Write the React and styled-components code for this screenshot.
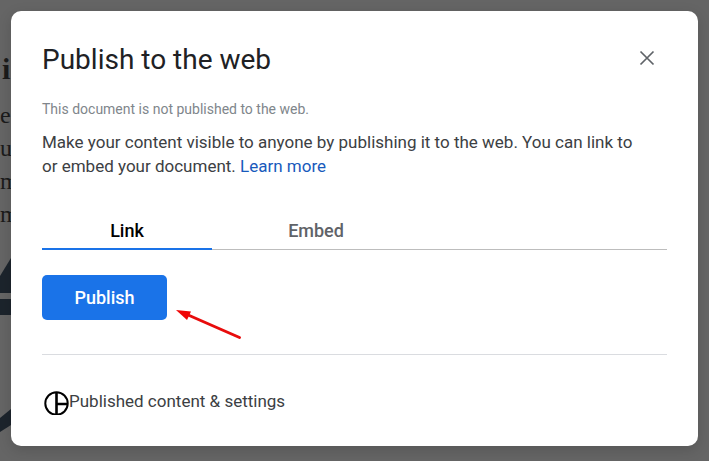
import React, { useState } from "react";
import styled, { createGlobalStyle } from "styled-components";

const GlobalStyle = createGlobalStyle`
  * {
    box-sizing: border-box;
  }

  body {
    margin: 0;
    background: #656565;
    font-family: Roboto, "Liberation Sans", sans-serif;
  }
`;

const Page = styled.div`
  display: grid;
  min-height: 100vh;
  overflow: hidden;

  > * {
    grid-area: 1 / 1;
  }
`;

// the document that stays behind the dialog
const Doc = styled.div`
  padding-top: 52px;
  color: #1b1b1b;
  font-family: "Liberation Serif", serif;
  font-size: 24px;
  line-height: 33px;
`;

const DocHeading = styled.h2`
  margin: 0 0 14px;
  padding-left: 2px;
  font-size: 30px;
  line-height: 33px;
`;

const DocText = styled.p`
  margin: 0;
`;

const DocDrawing = styled.svg`
  display: block;
  width: 11px;
  height: 180px;
  margin-top: 22px;
`;

const Overlay = styled.div`
  z-index: 1;
  padding: 11px 11px 15px;
`;

const Dialog = styled.section`
  padding: 31px;
  border-radius: 10px;
  background: #fff;
  box-shadow: 0 4px 14px rgba(0, 0, 0, 0.15);
  color: #3c4043;
  font-size: 17px;
  line-height: 24px;
`;

const Header = styled.header`
  display: flex;
  align-items: flex-start;
  justify-content: space-between;
  height: 36px;
`;

const Title = styled.h1`
  margin: 0;
  color: #202124;
  font-size: 28px;
  font-weight: 400;
  line-height: 36px;
`;

const CloseButton = styled.button`
  display: flex;
  align-items: center;
  justify-content: center;
  width: 40px;
  height: 32px;
  padding: 0;
  border: none;
  background: none;
  cursor: pointer;
`;

const Status = styled.p`
  margin: 21px 0 11px;
  color: #80868b;
  font-size: 14px;
  line-height: 20px;
`;

const Description = styled.p`
  margin: 0;
  padding-right: 20px;
`;

const LearnMore = styled.a`
  color: #185abc;
  text-decoration: none;
`;

const Tabs = styled.div`
  display: flex;
  height: 42px;
  margin-top: 30px;
  border-bottom: 1px solid #bdbdbd;
`;

const Tab = styled.button`
  flex: none;
  width: ${({ $wide }) => ($wide ? "208px" : "170px")};
  height: 42px;
  padding: 6px 0 0;
  border: none;
  border-bottom: 2px solid ${({ $active }) => ($active ? "#1a73e8" : "transparent")};
  background: none;
  color: ${({ $active }) => ($active ? "#000" : "#5f6368")};
  font-family: inherit;
  font-size: 18px;
  font-weight: 500;
  line-height: 24px;
  cursor: pointer;
`;

const Actions = styled.div`
  display: flex;
  margin-top: 25px;
  padding-bottom: 34px;
  border-bottom: 1px solid #dadce0;
`;

const PublishButton = styled.button`
  position: relative;
  width: 125px;
  height: 45px;
  padding: 0;
  border: none;
  border-radius: 5px;
  background: #1a73e8;
  color: #fff;
  font-family: inherit;
  font-size: 18px;
  font-weight: 500;
  line-height: 24px;
  cursor: pointer;
`;

const Arrow = styled.svg`
  position: absolute;
  top: 32px;
  left: 133px;
  pointer-events: none;
`;

const Settings = styled.button`
  display: flex;
  align-items: flex-start;
  height: 26px;
  margin-top: 34px;
  padding: 0 0 0 2px;
  border: none;
  background: none;
  color: #3c4043;
  font-family: inherit;
  font-size: 17px;
  line-height: 24px;
  cursor: pointer;
`;

const SettingsIcon = styled.svg`
  flex: none;
  margin-top: 2px;
`;

const App = () => {
  const [tab, setTab] = useState("link");

  return (
    <>
      <GlobalStyle />
      <Page>
        <Doc aria-hidden="true">
          <DocHeading>i</DocHeading>
          <DocText>e</DocText>
          <DocText>u</DocText>
          <DocText>m</DocText>
          <DocText>m</DocText>
          <DocDrawing viewBox="0 0 11 180" fill="#1c242c">
            <path d="M0 23 L11 5 V40 H0 Z" />
            <path d="M0 46 H11 V62 H0 Z" />
            <path d="M0 165 L11 156 V172 L0 179 Z" />
          </DocDrawing>
        </Doc>
        <Overlay>
          <Dialog role="dialog" aria-labelledby="title">
            <Header>
              <Title id="title">Publish to the web</Title>
              <CloseButton aria-label="Close">
                <svg width="16" height="16" viewBox="0 0 16 16" stroke="#5f6368" strokeWidth="1.7">
                  <path d="M1.5 1.5 14.5 14.5 M14.5 1.5 1.5 14.5" />
                </svg>
              </CloseButton>
            </Header>
            <Status>This document is not published to the web.</Status>
            <Description>
              Make your content visible to anyone by publishing it to the web. You can link to or
              embed your document. <LearnMore href="#">Learn more</LearnMore>
            </Description>
            <Tabs role="tablist">
              <Tab
                role="tab"
                aria-selected={tab === "link"}
                $active={tab === "link"}
                onClick={() => setTab("link")}
              >
                Link
              </Tab>
              <Tab
                role="tab"
                aria-selected={tab === "embed"}
                $wide
                $active={tab === "embed"}
                onClick={() => setTab("embed")}
              >
                Embed
              </Tab>
            </Tabs>
            <Actions>
              <PublishButton>
                Publish
                <Arrow width="70" height="36" viewBox="0 0 70 36" aria-hidden="true">
                  <path d="M12 7.5 L64.5 30.5" stroke="#e80c0c" strokeWidth="3" strokeLinecap="round" />
                  <path d="M1 3 L16 4.5 L12 13 Z" fill="#f00505" />
                </Arrow>
              </PublishButton>
            </Actions>
            <Settings>
              <SettingsIcon width="25" height="24" viewBox="0 0 25 24" fill="none" stroke="#000">
                <circle cx="12.5" cy="12.5" r="11.2" strokeWidth="2" />
                <path d="M12.5 1.5 V24 M13 13 H24" strokeWidth="2.6" />
              </SettingsIcon>
              Published content &amp; settings
            </Settings>
          </Dialog>
        </Overlay>
      </Page>
    </>
  );
};

export default App;
